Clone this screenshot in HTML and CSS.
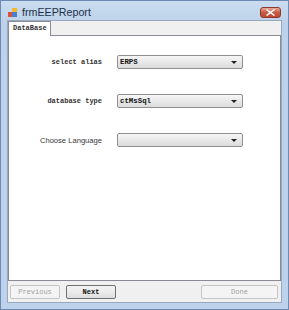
FILE: index.html
```html
<!DOCTYPE html>
<html lang="en">

<head>
  <meta charset="UTF-8">
  <title>frmEEPReport</title>
  <link rel="stylesheet" href="styles.css">
</head>

<body>
  <div class="window">
    <div class="titlebar">
      <svg class="appicon" width="10" height="9" viewBox="0 0 10 9">
        <rect x="0" y="4" width="5" height="5" fill="#d9503f"></rect>
        <rect x="4" y="0" width="5" height="5" fill="#f2b630"></rect>
        <rect x="4" y="4" width="5" height="5" fill="#4a7fd0"></rect>
      </svg>
      <span class="caption">frmEEPReport</span>
      <div class="close">
        <svg width="9" height="7" viewBox="0 0 9 7">
          <path d="M1 0 L4.5 2.5 L8 0 L9 1 L5.7 3.5 L9 6 L8 7 L4.5 4.5 L1 7 L0 6 L3.3 3.5 L0 1 Z" fill="#fff"></path>
        </svg>
      </div>
    </div>

    <div class="client">
      <div class="tabs">
        <div class="tab">DataBase</div>
        <div class="tabline"></div>
      </div>

      <div class="panel">
        <div class="row">
          <div class="label mono">select alias</div>
          <div class="combo"><span class="value">ERPS</span><span class="arrow"></span></div>
        </div>
        <div class="row">
          <div class="label mono">database type</div>
          <div class="combo"><span class="value">ctMsSql</span><span class="arrow"></span></div>
        </div>
        <div class="row">
          <div class="label sans">Choose Language</div>
          <div class="combo"><span class="value"></span><span class="arrow"></span></div>
        </div>
      </div>

      <div class="buttons">
        <div class="btn disabled">Previous</div>
        <div class="btn next">Next</div>
        <div class="spacer"></div>
        <div class="btn disabled done">Done</div>
      </div>
    </div>
  </div>
</body>

</html>
```

FILE: styles.css
```css
body {
  margin: 0;
  font-family: "Liberation Sans", sans-serif;
}

.window {
  width: 289px;
  height: 310px;
  box-sizing: border-box;
  border: 1px solid #6d8bb0;
  background: linear-gradient(#c9dcf0, #bdd2ea 22px, #bed3eb);
  padding: 0 6px 6px 6px;
  display: flex;
  flex-direction: column;
}

.titlebar {
  height: 19px;
  display: flex;
  align-items: center;
  position: relative;
}

.appicon {
  margin-left: 1px;
  margin-top: 3px;
}

.caption {
  margin-left: 4px;
  margin-top: 3px;
  font-size: 10.7px;
  color: #1e3048;
}

.close {
  position: absolute;
  right: 1px;
  top: 6px;
  width: 21px;
  height: 11px;
  box-sizing: border-box;
  border: 1px solid #8a3b2c;
  border-radius: 3px;
  background: linear-gradient(#e9a99a, #c75a44 50%, #c24a33);
  display: flex;
  align-items: center;
  justify-content: center;
}

.client {
  flex: 1;
  background: #f0f0f0;
  border: 1px solid #98a8bd;
  display: flex;
  flex-direction: column;
}

.tabs {
  display: flex;
  height: 15px;
  align-items: flex-end;
}

.tab {
  height: 15px;
  box-sizing: border-box;
  border: 1px solid #898c95;
  border-bottom: none;
  background: #fff;
  padding: 0 3px 0 4px;
  width: 43px;
  font-family: "Liberation Mono", monospace;
  font-size: 7px;
  font-weight: bold;
  line-height: 13px;
  color: #333;
}

.tabline {
  flex: 1;
  border-bottom: 1px solid #898c95;
}

.panel {
  flex: 1;
  background: #fff;
  border: 1px solid #898c95;
  border-top: none;
  padding-top: 19px;
  display: flex;
  flex-direction: column;
  gap: 25px;
}

.row {
  display: flex;
  align-items: center;
  height: 14px;
}

.label {
  width: 93px;
  text-align: right;
  color: #333;
}

.mono {
  font-family: "Liberation Mono", monospace;
  font-size: 7px;
  font-weight: bold;
}

.sans {
  font-size: 7.6px;
  color: #3a3a3a;
}

.combo {
  margin-left: 15px;
  width: 126px;
  height: 14px;
  box-sizing: border-box;
  border: 1px solid #8f8f8f;
  border-radius: 2px;
  background: linear-gradient(#f6f6f6, #e8e8e8 50%, #dcdcdc);
  display: flex;
  align-items: center;
  justify-content: space-between;
  padding: 0 5px 0 2px;
}

.value {
  font-family: "Liberation Mono", monospace;
  font-size: 7.4px;
  font-weight: bold;
  color: #111;
}

.arrow {
  width: 0;
  height: 0;
  border-left: 3px solid transparent;
  border-right: 3px solid transparent;
  border-top: 3px solid #222;
}

.buttons {
  height: 21px;
  display: flex;
  align-items: center;
  padding: 0 3px 0 2px;
  gap: 6px;
}

.btn {
  width: 50px;
  height: 14px;
  box-sizing: border-box;
  border: 1px solid #707070;
  border-radius: 2px;
  background: linear-gradient(#f2f2f2, #ebebeb 50%, #dddddd);
  font-family: "Liberation Mono", monospace;
  font-size: 7px;
  font-weight: bold;
  text-align: center;
  line-height: 12px;
  color: #111;
}

.btn.disabled {
  border-color: #c6c6c6;
  background: #f4f4f4;
  color: #a0a0a0;
  font-weight: normal;
}

.spacer {
  flex: 1;
}

.btn.done {
  width: 77px;
}
```
